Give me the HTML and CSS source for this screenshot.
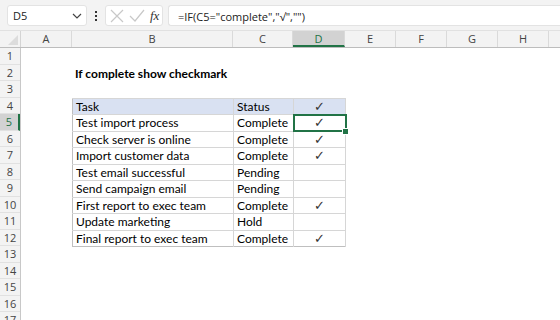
FILE: index.html
```html
<!DOCTYPE html>
<html lang="en">
  <head>
    <meta charset="UTF-8" />
    <title>If complete show checkmark</title>
    <link rel="stylesheet" href="styles.css">
  </head>
  <body>
    <div class="fbar">
      <div class="namebox">
        <span>D5</span>
        <svg width="10" height="6" viewBox="0 0 10 6"><path d="M1 1l4 4 4-4" fill="none" stroke="#444" stroke-width="1.2"/></svg>
      </div>
      <div class="dots"><i></i><i></i><i></i></div>
      <div class="btns">
        <svg width="14" height="14" viewBox="0 0 14 14"><path d="M1 1l12 12M13 1L1 13" stroke="#c8c8c8" stroke-width="1.2"/></svg>
        <svg width="16" height="14" viewBox="0 0 16 14"><path d="M1 7l5 5L15 1" fill="none" stroke="#c8c8c8" stroke-width="1.2"/></svg>
        <span class="fx">fx</span>
      </div>
      <div class="formula">=IF(C5="complete","√","")</div>
    </div>

    <div class="colhead">
      <div class="corner"><svg width="10" height="10" viewBox="0 0 10 10"><path d="M10 0V10H0z" fill="#dcdcdc"/></svg></div>
      <div class="ch a">A</div>
      <div class="ch b">B</div>
      <div class="ch c">C</div>
      <div class="ch d sel">D</div>
      <div class="ch e">E</div>
      <div class="ch e">F</div>
      <div class="ch e">G</div>
      <div class="ch e">H</div>
      <div class="ch rest"></div>
    </div>

    <div class="main">
      <div class="rowhead">
        <div>1</div><div>2</div><div>3</div><div>4</div>
        <div class="sel">5</div>
        <div>6</div><div>7</div><div>8</div><div>9</div><div>10</div>
        <div>11</div><div>12</div><div>13</div><div>14</div><div>15</div>
        <div>16</div><div>17</div>
      </div>
      <div class="cells">
        <div class="row"></div>
        <div class="row title">If complete show checkmark</div>
        <div class="row"></div>
        <table class="data">
          <tr class="hdr"><td>Task</td><td>Status</td><td class="chk">✓</td></tr>
          <tr><td>Test import process</td><td>Complete</td><td class="chk active">✓</td></tr>
          <tr><td>Check server is online</td><td>Complete</td><td class="chk">✓</td></tr>
          <tr><td>Import customer data</td><td>Complete</td><td class="chk">✓</td></tr>
          <tr><td>Test email successful</td><td>Pending</td><td class="chk"></td></tr>
          <tr><td>Send campaign email</td><td>Pending</td><td class="chk"></td></tr>
          <tr><td>First report to exec team</td><td>Complete</td><td class="chk">✓</td></tr>
          <tr><td>Update marketing</td><td>Hold</td><td class="chk"></td></tr>
          <tr><td>Final report to exec team</td><td>Complete</td><td class="chk">✓</td></tr>
        </table>
      </div>
    </div>
  </body>
</html>
```

FILE: styles.css
```css
* {
  margin: 0;
  padding: 0;
  box-sizing: border-box;
}
body {
  width: 560px;
  height: 320px;
  overflow: hidden;
  background: #fff;
  font-family: Lato, "Liberation Sans", sans-serif;
  color: #000;
}

/* formula bar */
.fbar {
  height: 31px;
  background: #f3f3f3;
  border-bottom: 1px solid #e1e1e1;
  display: flex;
  align-items: flex-start;
  padding: 5px 0 0 7px;
  font-family: "Open Sans", "Noto Sans", sans-serif;
  font-size: 11px;
}
.namebox {
  width: 80px;
  height: 21px;
  background: #fff;
  border: 1px solid #e3e3e3;
  border-radius: 3px;
  display: flex;
  align-items: center;
  justify-content: space-between;
  padding: 0 4px 0 5px;
  color: #222;
}
.dots {
  width: 18px;
  height: 21px;
  display: flex;
  flex-direction: column;
  align-items: center;
  justify-content: center;
  gap: 2px;
}
.dots i {
  width: 2px;
  height: 2px;
  background: #333;
}
.btns {
  width: 58px;
  height: 21px;
  background: #fff;
  border: 1px solid #e3e3e3;
  border-radius: 3px;
  display: flex;
  align-items: center;
  gap: 5px;
  padding-left: 4px;
}
.fx {
  font-family: "Liberation Serif", serif;
  font-style: italic;
  font-size: 13px;
  color: #333;
}
.formula {
  flex: 1;
  height: 21px;
  margin-left: 5px;
  background: #fff;
  border: 1px solid #e3e3e3;
  border-right: none;
  border-radius: 3px 0 0 3px;
  padding: 3px 0 0 9px;
  color: #222;
}

/* column header */
.colhead {
  height: 17px;
  display: flex;
  background: #f3f3f3;
  border-bottom: 1px solid #bdbdbd;
  font-family: "Open Sans", "Noto Sans", sans-serif;
  font-size: 11px;
  color: #444;
}
.corner {
  width: 21px;
  border-right: 1px solid #d4d4d4;
  display: flex;
  align-items: flex-end;
  justify-content: flex-end;
  padding: 0 2px 2px 0;
}
.ch {
  border-right: 1px solid #dadada;
  text-align: center;
  line-height: 16px;
}
.ch.a { width: 51px; }
.ch.b { width: 161px; }
.ch.c { width: 60px; }
.ch.d { width: 52px; }
.ch.e { width: 51px; }
.ch.rest { flex: 1; border-right: none; }
.ch.sel {
  background: #d2d2d2;
  border-bottom: 2px solid #217346;
  color: #217346;
}

/* sheet body */
.main {
  display: flex;
}
.rowhead {
  width: 21px;
  background: #f3f3f3;
  border-right: 1px solid #c8c8c8;
  font-family: "Open Sans", "Noto Sans", sans-serif;
  font-size: 11px;
  color: #444;
}
.rowhead div {
  height: 16.5px;
  line-height: 16px;
  text-align: center;
  border-bottom: 1px solid #e1e1e1;
}
.rowhead .sel {
  background: #d2d2d2;
  color: #217346;
  border-right: 2px solid #217346;
}
.cells {
  flex: 1;
  padding-left: 51px;
  font-size: 12px;
}
.row {
  height: 16.5px;
}
.title {
  font-weight: bold;
  padding-left: 3px;
  line-height: 17px;
}
.data {
  border-collapse: collapse;
  border: 1px solid #bfbfbf;
}
.data td {
  height: 16.5px;
  padding: 0 3px;
  border-top: 1px solid #d6d6d6;
  border-right: 1px solid #d6d6d6;
  line-height: 15px;
  white-space: nowrap;
}
.data td:nth-child(1) { width: 161px; }
.data td:nth-child(2) { width: 60px; }
.data td:nth-child(3) { width: 52px; }
.data .hdr td {
  background: #d9e1f2;
}
.data .chk {
  text-align: center;
  font-family: "DejaVu Sans", sans-serif;
  font-size: 13px;
  color: #333;
}
.data .active {
  position: relative;
  outline: 2px solid #217346;
  outline-offset: -1px;
}
.data .active::after {
  content: "";
  position: absolute;
  right: -4px;
  bottom: -4px;
  width: 5px;
  height: 5px;
  background: #217346;
  border: 1px solid #fff;
}
```
